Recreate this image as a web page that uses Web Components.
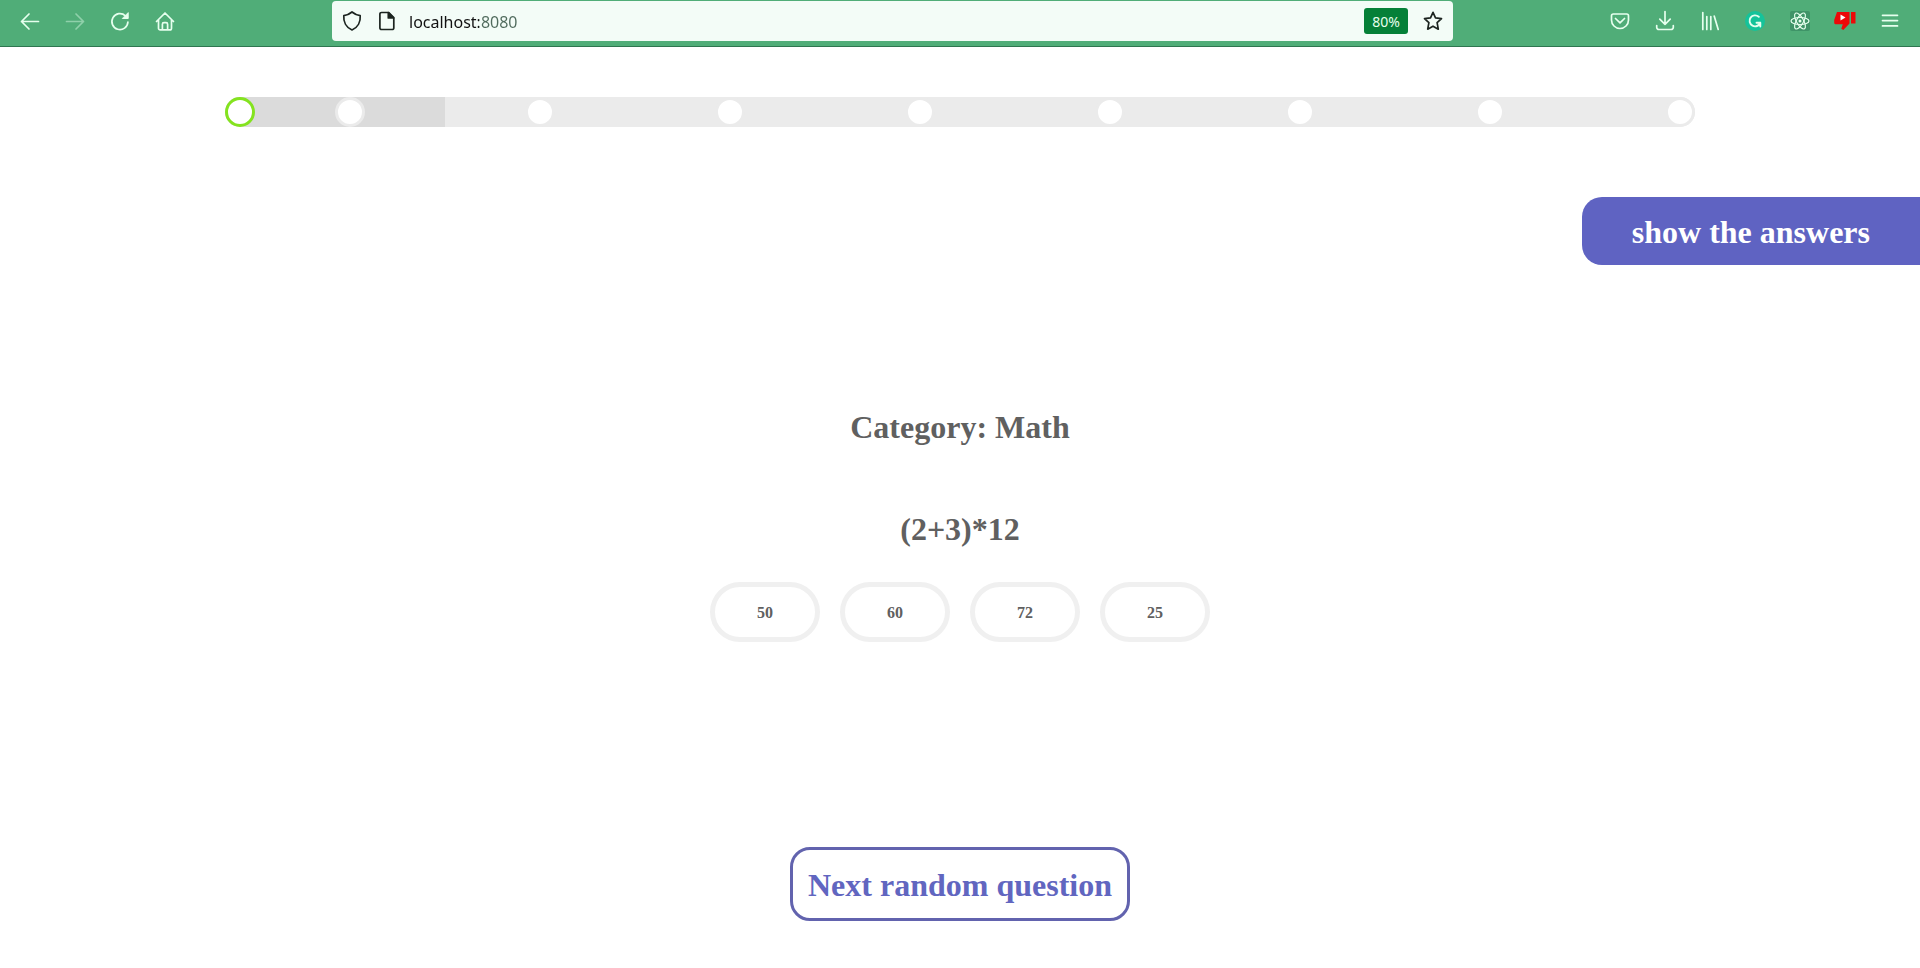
<!DOCTYPE html>
<html lang="en">
<head>
<meta charset="utf-8">
<title>Random quiz</title>
<style>
  body { margin: 0; background: #fff; color: #606060; font: bold 32px/36px "Liberation Serif", "Times New Roman", serif; }
</style>
</head>
<body>
<browser-bar></browser-bar>
<quiz-page>
  <quiz-progress slot="progress"></quiz-progress>
  <quiz-button slot="reveal" kind="reveal">show the answers</quiz-button>
  <quiz-question category="Category: Math" question="(2+3)*12">
    <quiz-button kind="answer">50</quiz-button>
    <quiz-button kind="answer">60</quiz-button>
    <quiz-button kind="answer">72</quiz-button>
    <quiz-button kind="answer">25</quiz-button>
  </quiz-question>
  <quiz-button slot="next" kind="next">Next random question</quiz-button>
</quiz-page>

<script>
const ICONS = {
  back: '<path d="M18.5 10.500h-17M9 3 1.500 10.500 9 18"/>',
  forward: '<path d="M1.500 10.500h17M11 3l7.500 7.500L11 18"/>',
  reload: '<path d="M17.900 11A8 8 0 1 1 15.400 4.800"/><path d="M18.200 2v5.500h-5.500z" fill="currentColor" stroke-width="1"/>',
  home: '<path d="M1.500 10.500 10 2l8.500 8.500M3.500 9v8.200a1.700 1.700 0 0 0 1.700 1.700h9.600a1.700 1.700 0 0 0 1.700-1.700V9M7.400 18.700v-5.500a1.500 1.500 0 0 1 1.500-1.500h2.200a1.500 1.500 0 0 1 1.500 1.500v5.500"/>',
  shield: '<path d="M10 1c2.600 2.200 5.200 3.200 8.200 3.700.5 6-2.200 11.800-8.200 14.300C4 16.500 1.300 10.700 1.800 4.700 4.800 4.200 7.400 3.200 10 1z"/>',
  page: '<path d="M4.500 1.500h7.300l5 5v10.400a1.600 1.600 0 0 1-1.600 1.600H4.500a1.600 1.600 0 0 1-1.600-1.600V3.100a1.600 1.600 0 0 1 1.600-1.600z"/><path d="M11.300 1.700v5.300h5.300z" fill="currentColor"/>',
  star: '<path d="m10 1.300 2.500 5.500 6 .8-4.400 4.100 1.200 6.500-5.300-3-5.300 3 1.200-6.500-4.400-4.100 6-.8z"/>',
  pocket: '<path d="M3.300 3h13.400c1 0 1.800.8 1.800 1.800V9a8.500 8.500 0 0 1-17 0V4.800C1.500 3.800 2.300 3 3.300 3zM5.500 7.500 10 11.800l4.500-4.300"/>',
  download: '<path d="M10 .5v12.800M4.800 8.200 10 13.400l5.200-5.200M1.700 14.500v1.800a2.200 2.200 0 0 0 2.200 2.200h12.200a2.200 2.200 0 0 0 2.200-2.200v-1.800"/>',
  library: '<path d="M2.800 1.500v17M6.800 5.500v13M10.800 5.500v13M14.200 5l4 13.500"/>',
  grammar: '<circle cx="10" cy="10" r="10" fill="#15c39a" stroke="none"/><path stroke-width="1.900" d="M13.800 5.800a5.500 5.500 0 1 0 1.400 6H11.500M15.300 11.800v3.700"/>',
  react: '<rect width="20" height="20" rx="2" fill="#3f9468" stroke="none"/><g stroke-width="1.200"><ellipse cx="10" cy="10" rx="9" ry="3.500"/><ellipse cx="10" cy="10" rx="9" ry="3.500" transform="rotate(60 10 10)"/><ellipse cx="10" cy="10" rx="9" ry="3.500" transform="rotate(120 10 10)"/></g><circle cx="10" cy="10" r="1.500" fill="currentColor" stroke="none"/>',
  dislike: '<path d="M2 1h12.500v11.500L8.300 19 6.300 17.800l1.500-4.600H.5A1.500 1.500 0 0 1-.8 11.500V9z" fill="#ec0808" stroke="none"/><path d="M16 1h4.500v11.500H16z" fill="#ec0808" stroke="none"/><path d="m5.500 3.500 5 3-5 3z" fill="#fff" stroke="none"/>',
  menu: '<path d="M2.500 4.300h15M2.500 9.600h15M2.500 14.900h15"/>'
};

class UiIcon extends HTMLElement {
  connectedCallback() {
    this.attachShadow({ mode: "open" }).innerHTML = `
      <style>
        :host { display: block; width: 20px; height: 20px; }
        svg { display: block; width: 100%; height: 100%; overflow: visible; fill: none; stroke: currentColor; stroke-width: 1.700; stroke-linecap: round; stroke-linejoin: round; }
      </style>
      <svg viewBox="0 0 20 20" aria-hidden="true">${ICONS[this.getAttribute("name")]}</svg>`;
  }
}
customElements.define("ui-icon", UiIcon);

class BrowserBar extends HTMLElement {
  connectedCallback() {
    const tool = ([name, label]) => `<button type="button" aria-label="${label}" class="${name}"><ui-icon name="${name}"></ui-icon></button>`;
    const left = [["back", "Back"], ["forward", "Forward"], ["reload", "Reload"], ["home", "Home"]].map(tool).join("");
    const right = [["pocket", "Save to Pocket"], ["download", "Downloads"], ["library", "Library"], ["grammar", "Grammar check"], ["react", "React tools"], ["dislike", "Show dislikes"], ["menu", "Menu"]].map(tool).join("");
    this.attachShadow({ mode: "open" }).innerHTML = `
      <style>
        :host { display: flex; padding: 1px 8px 5px 7px; background: #50ad78; border-bottom: 1px solid #2f7650; box-sizing: border-box; font: 16px/24px "Noto Sans", sans-serif; color: #e6ffee; }
        nav { display: flex; }
        button { border: 0; padding: 0; margin: 0; background: none; color: inherit; font: inherit; display: grid; place-items: center; }
        nav button { width: 45px; height: 40px; }
        .forward { color: #8fd0aa; }
        .address { flex: 1; min-width: 0; margin: 0 144px 0 145px; height: 40px; box-sizing: border-box; display: flex; align-items: center; gap: 12px; padding: 0 10px; background: #f3fcf7; border-radius: 4px; color: #1c2420; }
        .site { display: flex; gap: 15px; }
        input { flex: 1; min-width: 0; height: 26px; border: 0; padding: 2px 0 0; outline: 0; font: inherit; color: #111; background: linear-gradient(90deg, #111 70px, #4f6a5c 70px) text; -webkit-text-fill-color: transparent; }
        .zoom { width: 44px; height: 26px; padding-top: 2px; border-radius: 3px; background: #058038; color: #e6ffee; font-size: 14px; margin-right: 3px; }
      </style>
      <nav aria-label="Navigation">${left}</nav>
      <div class="address">
        <div class="site"><ui-icon name="shield"></ui-icon><ui-icon name="page"></ui-icon></div>
        <input type="text" aria-label="Address" value="localhost:8080">
        <button type="button" class="zoom">80%</button>
        <button type="button" aria-label="Bookmark this page"><ui-icon name="star"></ui-icon></button>
      </div>
      <nav aria-label="Tools">${right}</nav>`;
  }
}
customElements.define("browser-bar", BrowserBar);

class QuizProgress extends HTMLElement {
  connectedCallback() {
    this.attachShadow({ mode: "open" }).innerHTML = `
      <style>
        :host { display: block; }
        ol { list-style: none; margin: 0; padding: 0; display: grid; grid-template-columns: 30px 11fr repeat(7, 19fr); justify-items: end; border-radius: 15px; background: linear-gradient(90deg, #dbdbdb 15%, #ebebeb 15%); }
        li { width: 30px; height: 30px; box-sizing: border-box; border: 3px solid #ebebeb; border-radius: 50%; background: #fff; }
        .current { border-color: #84e31f; }
      </style>
      <ol aria-label="Progress"><li class="current"></li>${"<li></li>".repeat(8)}</ol>`;
  }
}
customElements.define("quiz-progress", QuizProgress);

class QuizButton extends HTMLElement {
  connectedCallback() {
    this.attachShadow({ mode: "open" }).innerHTML = `
      <style>
        :host { display: block; }
        button { display: block; box-sizing: border-box; margin: 0; font: inherit; cursor: pointer; }
        .reveal { padding: 17px 50px 15px; border: 0; border-radius: 20px 0 0 20px; background: #5f63c2; color: #fff; }
        .next { padding: 17px 15px 15px; border: 3px solid #6263ae; border-radius: 20px; background: #fff; color: #6166c0; }
        .answer { width: 110px; height: 60px; padding: 2px 0 0; border: 5px solid #f0f0f0; border-radius: 30px; background: #fff; color: #606060; font-size: 16px; line-height: 20px; }
      </style>
      <button type="button" class="${this.getAttribute("kind")}"><slot></slot></button>`;
  }
}
customElements.define("quiz-button", QuizButton);

class QuizQuestion extends HTMLElement {
  connectedCallback() {
    this.attachShadow({ mode: "open" }).innerHTML = `
      <style>
        :host { display: flex; flex-direction: column; align-items: center; }
        h1, h2 { margin: 0; font: inherit; text-align: center; }
        h1 { margin-bottom: 66px; }
        h2 { margin-bottom: 35px; }
        .answers { display: flex; gap: 20px; }
      </style>
      <h1>${this.getAttribute("category")}</h1>
      <h2>${this.getAttribute("question")}</h2>
      <div class="answers"><slot></slot></div>`;
  }
}
customElements.define("quiz-question", QuizQuestion);

class QuizPage extends HTMLElement {
  connectedCallback() {
    this.attachShadow({ mode: "open" }).innerHTML = `
      <style>
        :host { display: block; }
        main { display: flex; flex-direction: column; padding: 50px 0 47px; }
        .progress { padding: 0 225px; margin-bottom: 70px; }
        .reveal { align-self: flex-end; margin-bottom: 144px; }
        .next { align-self: center; margin-top: 205px; }
      </style>
      <main>
        <div class="progress"><slot name="progress"></slot></div>
        <div class="reveal"><slot name="reveal"></slot></div>
        <slot></slot>
        <div class="next"><slot name="next"></slot></div>
      </main>`;
  }
}
customElements.define("quiz-page", QuizPage);
</script>
</body>
</html>
